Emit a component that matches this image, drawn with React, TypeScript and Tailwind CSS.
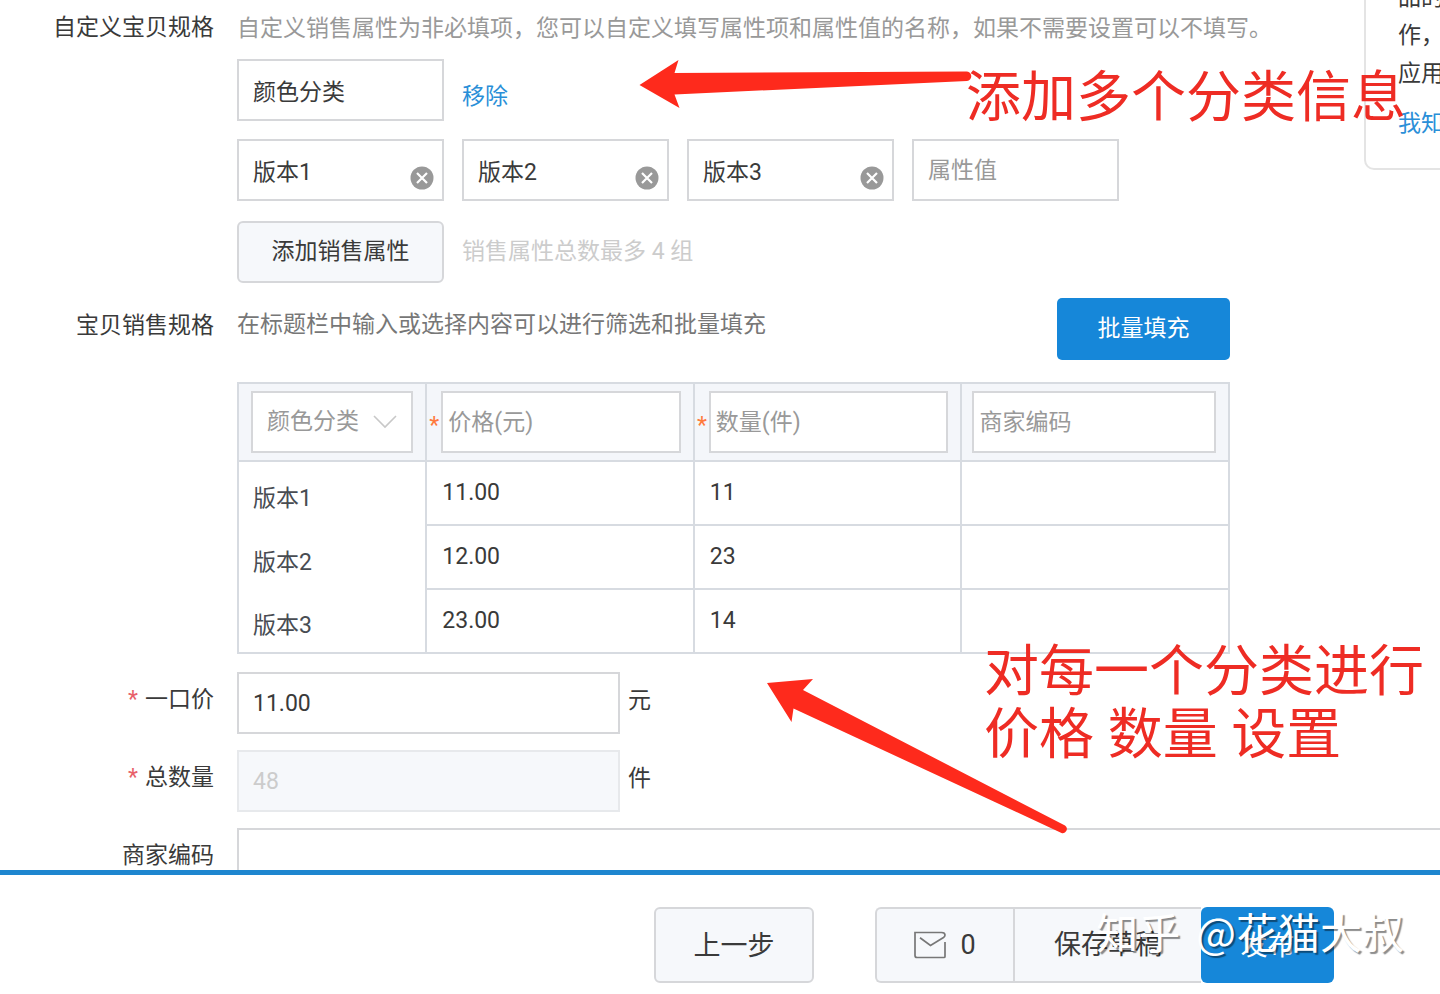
import { ReactNode } from 'react'

const box = 'h-[62px] border-2 border-[#d6d7da] bg-white text-[#3a3a3a] outline-none placeholder:text-[#999] placeholder:opacity-100'
const field = `${box} px-[14px]`
const headField = `${box} px-[5px]`
const cell = 'border-2 border-[#d7dbe1]'

const versions = [
  { name: '版本1', price: '11.00', count: '11' },
  { name: '版本2', price: '12.00', count: '23' },
  { name: '版本3', price: '23.00', count: '14' },
]

function Row({
  label,
  htmlFor,
  required,
  className = '',
  children,
}: {
  label: string
  htmlFor?: string
  required?: boolean
  className?: string
  children: ReactNode
}) {
  return (
    <div className={`flex items-start gap-[23px] ${className}`}>
      <label htmlFor={htmlFor} className="flex w-[214px] shrink-0 justify-end gap-[7px] pt-3">
        {required && <span className="text-[#e8616a]">*</span>}
        {label}
      </label>
      {children}
    </div>
  )
}

function ClearIcon() {
  return (
    <svg viewBox="0 0 24 24" className="size-6" aria-hidden="true">
      <circle cx="12" cy="12" r="11.5" fill="#999" />
      <path d="M7 7l10 10M17 7L7 17" stroke="#fff" strokeWidth="2.2" />
    </svg>
  )
}

function MailIcon() {
  return (
    <svg viewBox="0 0 32 28" className="h-7 w-8" fill="none" stroke="#777" strokeWidth="1.7" aria-hidden="true">
      <path d="M31 11V25.500Q31 26.500 30 26.500H3Q1 26.500 1 24.500V1.500H27.500Q31 1.500 31 4Q31 5.500 29.500 6.500L16.500 14.500L6 6.800" />
    </svg>
  )
}

function SpecTable() {
  return (
    <table className={`w-full max-w-[993px] table-fixed border-collapse ${cell}`}>
      <colgroup>
        <col className="w-[19%]" />
        <col className="w-[27%]" />
        <col className="w-[27%]" />
        <col className="w-[27%]" />
      </colgroup>
      <thead>
        <tr className="h-[78px] bg-[#f4f6fa]">
          <th className={`${cell} px-3 py-0 font-normal`}>
            <div className="relative">
              <select aria-label="颜色分类" className="block h-[62px] w-full appearance-none border-2 border-[#d6d7da] bg-white px-[14px] text-[#999] outline-none">
                <option>颜色分类</option>
              </select>
              <svg
                viewBox="0 0 24 14"
                className="pointer-events-none absolute top-6 right-4 h-[14px] w-6"
                fill="none"
                stroke="#c8c8c8"
                strokeWidth="1.6"
                aria-hidden="true"
              >
                <path d="M1 1l11 11L23 1" />
              </svg>
            </div>
          </th>
          {['价格(元)', '数量(件)'].map((name) => (
            <th key={name} className={`${cell} py-0 pr-3 pl-[2px] font-normal`}>
              <div className="flex items-center gap-[2px]">
                <span className="w-[10px] shrink-0 pt-2 text-[#ff7a3d]">*</span>
                <input aria-label={name} placeholder={name} className={`${headField} w-full min-w-0`} />
              </div>
            </th>
          ))}
          <th className={`${cell} py-0 pr-3 pl-[10px] font-normal`}>
            <input aria-label="商家编码" placeholder="商家编码" className={`${headField} block w-full`} />
          </th>
        </tr>
      </thead>
      <tbody>
        {versions.map((v) => (
          <tr key={v.name} className="h-16">
            <td className="px-[14px] pt-[11px] pb-0 text-[#484c52]">{v.name}</td>
            <td className={`${cell} p-0`}>
              <input aria-label={`${v.name} 价格`} defaultValue={v.price} className="block h-15 w-full px-[15px] pb-[2px] outline-none" />
            </td>
            <td className={`${cell} p-0`}>
              <input aria-label={`${v.name} 数量`} defaultValue={v.count} className="block h-15 w-full px-[15px] pb-[2px] outline-none" />
            </td>
            <td className={`${cell} p-0`}>
              <input aria-label={`${v.name} 商家编码`} className="block h-15 w-full px-[15px] outline-none" />
            </td>
          </tr>
        ))}
      </tbody>
    </table>
  )
}

function Annotations() {
  return (
    <div className="pointer-events-none absolute inset-0 overflow-hidden text-[55px] leading-[63px] whitespace-nowrap text-[#ee2c24]">
      <svg width="1440" height="870" viewBox="0 0 1440 870" className="absolute top-0 left-0 max-w-none" fill="#fe2a1c" aria-hidden="true">
        <path d="M639.500 85L678.500 60L674.500 73L966 71.500A4.700 4.700 0 0 1 967 81L674.500 94.500L679.500 108Z" />
        <path d="M767 683L813 679L803 690L1065 825.500A4.200 4.200 0 0 1 1061.500 833L793.500 708.500L791.500 722Z" />
      </svg>
      <p className="absolute top-[66px] left-[966px]">添加多个分类信息</p>
      <p className="absolute top-[640px] left-[984px]">
        对每一个分类进行
        <br />
        价格 数量 设置
      </p>
    </div>
  )
}

export default function App() {
  return (
    <div className="relative flex h-screen flex-col overflow-hidden bg-white font-[Roboto,'Noto_Sans_CJK_SC',sans-serif] text-[23px] leading-8 text-[#3a3a3a]">
      <main className="relative min-h-0 flex-1 overflow-hidden">
        <Row label="自定义宝贝规格" htmlFor="spec-name">
          <div className="flex min-w-0 flex-col">
            <p className="pt-[13px] whitespace-nowrap text-[#999]">
              自定义销售属性为非必填项，您可以自定义填写属性项和属性值的名称，如果不需要设置可以不填写。
            </p>
            <div className="mt-[14px] flex items-center gap-[18px]">
              <input id="spec-name" defaultValue="颜色分类" className={`${field} w-[207px]`} />
              <a href="#remove" className="pt-[14px] text-[#2a8fd8]">
                移除
              </a>
            </div>
            <div className="mt-[18px] flex gap-[18px]">
              {versions.map((v) => (
                <div key={v.name} className="relative w-[207px]">
                  <input aria-label={v.name} defaultValue={v.name} className={`${box} block w-full pr-10 pl-[14px]`} />
                  <button type="button" aria-label={`清除${v.name}`} className="absolute right-[10px] bottom-[11px]">
                    <ClearIcon />
                  </button>
                </div>
              ))}
              <input aria-label="属性值" placeholder="属性值" className={`${field} w-[207px]`} />
            </div>
            <div className="mt-5 flex items-center gap-[18px]">
              <button type="button" className="h-[62px] w-[207px] rounded-md border-2 border-[#d6d7da] bg-[#f6f8fb]">
                添加销售属性
              </button>
              <span className="text-[#ccc]">销售属性总数最多 4 组</span>
            </div>
          </div>
        </Row>

        <Row label="宝贝销售规格" className="mt-[15px]">
          <div className="min-w-0 flex-1 pr-3">
            <div className="mb-[22px] flex max-w-[993px] items-start justify-between">
              <p className="pt-[11px] text-[#777]">在标题栏中输入或选择内容可以进行筛选和批量填充</p>
              <button type="button" className="h-[62px] w-[173px] rounded-[5px] bg-[#1687d9] text-white">
                批量填充
              </button>
            </div>
            <SpecTable />
          </div>
        </Row>

        <Row label="一口价" htmlFor="price" required className="mt-[18px]">
          <div className="flex items-start gap-2">
            <input id="price" defaultValue="11.00" className={`${field} w-[383px]`} />
            <span className="pt-[13px]">元</span>
          </div>
        </Row>
        <Row label="总数量" htmlFor="total" required className="mt-4">
          <div className="flex items-start gap-2">
            <input
              id="total"
              defaultValue="48"
              disabled
              className="h-[62px] w-[383px] border-2 border-[#e7e9ec] bg-[#f6f8fb] px-[14px] text-[#ccc]"
            />
            <span className="pt-[13px]">件</span>
          </div>
        </Row>
        <Row label="商家编码" htmlFor="code" className="mt-4">
          <input id="code" className={`${field} min-w-0 flex-1 border-r-0`} />
        </Row>

        <aside className="absolute -top-[23px] -right-40 h-[193px] w-[236px] rounded-[10px] border-2 border-[#e4e4e4] bg-white pl-8 leading-[38px]">
          <p>
            品的
            <br />
            作，
            <br />
            应用
          </p>
          <a href="#known" className="mt-3 block text-[#2a8fd8]">
            我知
          </a>
        </aside>
        <Annotations />
      </main>

      <footer className="relative flex shrink-0 justify-end gap-[61px] border-t-[5px] border-[#1e86cf] pt-8 pr-[106px] pb-[11px] text-[27px]">
        <button type="button" className="h-[76px] w-[160px] rounded-md border-2 border-[#d6d7da] bg-[#f6f8fb] pt-[2px]">
          上一步
        </button>
        <div className="flex">
          <button
            type="button"
            className="flex h-[76px] w-[138px] items-center justify-center gap-[14px] rounded-l-md border-2 border-r-0 border-[#d6d7da] bg-[#f6f8fb]"
          >
            <MailIcon />0
          </button>
          <button type="button" className="h-[76px] w-[188px] border-2 border-r-0 border-[#d6d7da] bg-[#f6f8fb]">
            保存草稿
          </button>
          <button type="button" className="h-[76px] w-[133px] rounded-md bg-[#1687d9] pt-[2px] text-white">
            发布
          </button>
        </div>
        <p className="pointer-events-none absolute top-[26px] right-[36px] flex gap-[16px] font-['Noto_Sans_CJK_SC',sans-serif] text-[42px] leading-[60px] whitespace-nowrap text-white [text-shadow:2px_2px_1px_rgb(0_0_0/0.45)]">
          <span>知乎</span>
          <span>@花猫大叔</span>
        </p>
      </footer>
    </div>
  )
}
